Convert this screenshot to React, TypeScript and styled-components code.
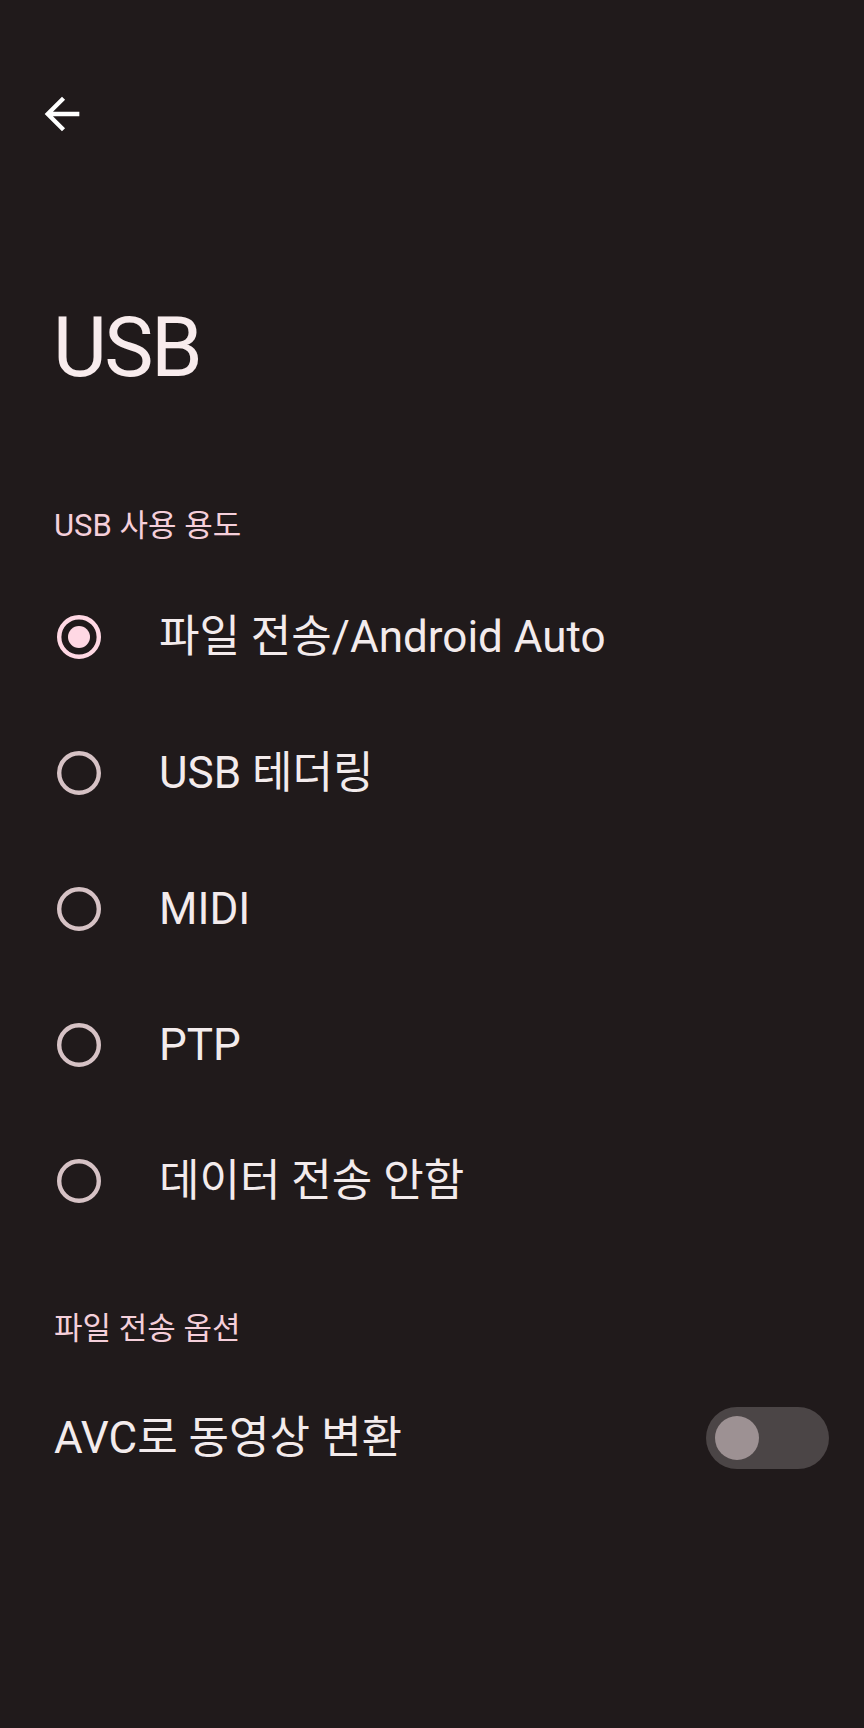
import React from "react";
import styled, { createGlobalStyle } from "styled-components";

const GlobalStyle = createGlobalStyle`
  html, body {
    margin: 0;
    padding: 0;
    background: #201a1b;
  }
  body {
    font-family: "Roboto", "Noto Sans CJK KR", sans-serif;
    -webkit-font-smoothing: antialiased;
  }
`;

const Page = styled.div`
  width: 864px;
  min-height: 1728px;
  background: #201a1b;
  display: flex;
  flex-direction: column;
`;

const TopBar = styled.div`
  display: flex;
  align-items: center;
  padding: 88px 0 0 36px;
  height: 52px;
`;

const BackButton = styled.button`
  width: 52px;
  height: 52px;
  padding: 0;
  border: none;
  background: transparent;
  color: #ffffff;
  display: flex;
  align-items: center;
  justify-content: center;
`;

const Title = styled.h1`
  margin: 158px 0 0 0;
  padding-left: 53px;
  height: 100px;
  line-height: 100px;
  font-size: 83px;
  font-weight: 400;
  letter-spacing: -2.5px;
  color: #f8eced;
`;

const SectionHeader = styled.div<{ $top: number }>`
  margin-top: ${(p) => p.$top}px;
  padding-left: 54px;
  height: 40px;
  line-height: 40px;
  font-size: 31px;
  font-weight: 400;
  color: #f5cfda;
`;

const List = styled.div<{ $top: number }>`
  margin-top: ${(p) => p.$top}px;
  display: flex;
  flex-direction: column;
`;

const RadioRow = styled.div`
  height: 136px;
  display: flex;
  align-items: center;
  padding-left: 57px;
`;

const RadioLabel = styled.span`
  margin-left: 58px;
  font-size: 44px;
  line-height: 56px;
  color: #f3ebec;
`;

const SwitchRow = styled.div`
  height: 136px;
  display: flex;
  align-items: center;
  justify-content: space-between;
  padding: 0 35px 0 54px;
`;

const SwitchLabel = styled.span`
  font-size: 44px;
  line-height: 56px;
  color: #f3ebec;
`;

const Track = styled.div<{ $on: boolean }>`
  width: 123px;
  height: 62px;
  border-radius: 31px;
  background: ${(p) => (p.$on ? "#ffb0c8" : "#4b4546")};
  display: flex;
  align-items: center;
  padding: 0 9px;
  box-sizing: border-box;
  justify-content: ${(p) => (p.$on ? "flex-end" : "flex-start")};
`;

const Thumb = styled.div`
  width: 44px;
  height: 44px;
  border-radius: 50%;
  background: #9d9193;
`;

const Radio = ({ checked }: { checked: boolean }) => {
  const color = checked ? "#ffd8e4" : "#d6c2c5";
  return (
    <svg width="44" height="44" viewBox="0 0 44 44">
      <circle cx="22" cy="22" r="19.8" fill="none" stroke={color} strokeWidth="4.4" />
      {checked && <circle cx="22" cy="22" r="11" fill={color} />}
    </svg>
  );
};

const options = [
  { label: "파일 전송/Android Auto", checked: true },
  { label: "USB 테더링", checked: false },
  { label: "MIDI", checked: false },
  { label: "PTP", checked: false },
  { label: "데이터 전송 안함", checked: false },
];

export default function App() {
  return (
    <>
      <GlobalStyle />
      <Page>
        <TopBar>
          <BackButton aria-label="뒤로">
            <svg width="52" height="52" viewBox="0 0 24 24" fill="currentColor">
              <path d="M20 11H7.83l5.59-5.59L12 4l-8 8 8 8 1.41-1.41L7.83 13H20v-2z" />
            </svg>
          </BackButton>
        </TopBar>
        <Title>USB</Title>
        <SectionHeader $top={108}>USB 사용 용도</SectionHeader>
        <List $top={23}>
          {options.map((o) => (
            <RadioRow key={o.label}>
              <Radio checked={o.checked} />
              <RadioLabel>{o.label}</RadioLabel>
            </RadioRow>
          ))}
        </List>
        <SectionHeader $top={60}>파일 전송 옵션</SectionHeader>
        <List $top={21}>
          <SwitchRow>
            <SwitchLabel>AVC로 동영상 변환</SwitchLabel>
            <Track $on={false}>
              <Thumb />
            </Track>
          </SwitchRow>
        </List>
      </Page>
    </>
  );
}
